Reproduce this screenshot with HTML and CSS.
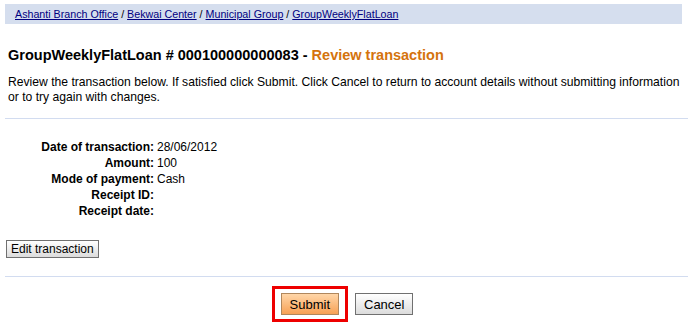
FILE: index.html
```html
<!DOCTYPE html>
<html lang="en">
<head>
    <meta charset="UTF-8">
    <title>Review transaction</title>
    <link rel="stylesheet" href="styles.css">
</head>
<body>
    <!-- Breadcrumb -->
    <div class="breadcrumb">
        <a href="#">Ashanti Branch Office</a> / <a href="#">Bekwai Center</a> / <a href="#">Municipal Group</a> / <a href="#">GroupWeeklyFlatLoan</a>
    </div>

    <div class="content">
        <h1 class="heading">GroupWeeklyFlatLoan # 000100000000083 - <span class="heading-accent">Review transaction</span></h1>
        <p class="intro">Review the transaction below. If satisfied click Submit. Click Cancel to return to account details without submitting information or to try again with changes.</p>
    </div>

    <hr class="divider">

    <!-- Transactie details -->
    <div class="details">
        <div class="label">Date of transaction:</div><div class="value">28/06/2012</div>
        <div class="label">Amount:</div><div class="value">100</div>
        <div class="label">Mode of payment:</div><div class="value">Cash</div>
        <div class="label">Receipt ID:</div><div class="value"></div>
        <div class="label">Receipt date:</div><div class="value"></div>
    </div>

    <div class="edit-row">
        <button class="btn">Edit transaction</button>
    </div>

    <hr class="divider divider-bottom">

    <div class="actions">
        <span class="highlight"><button class="btn btn-primary">Submit</button></span>
        <button class="btn">Cancel</button>
    </div>
</body>
</html>
```

FILE: styles.css
```css
* {
    margin: 0;
    padding: 0;
    box-sizing: border-box;
}

body {
    background-color: #ffffff;
    font-family: "Liberation Sans", Arial, sans-serif;
    font-size: 12px;
    color: #000000;
    padding: 4px 7px 0 5px;
}

/* Breadcrumb styling */
.breadcrumb {
    background-color: #d5deee;
    height: 20px;
    line-height: 20px;
    padding-left: 10px;
    font-size: 10.7px;
    width: 677px;
}

.breadcrumb a {
    color: #000080;
}

.content {
    padding: 0 3px;
}

.heading {
    font-size: 14.5px;
    font-weight: bold;
    margin-top: 22px;
    line-height: 18px;
}

.heading-accent {
    color: #d4730d;
}

.intro {
    margin-top: 11px;
    font-size: 12.15px;
    line-height: 15px;
}

.divider {
    border: none;
    border-top: 1px solid #d2dcf0;
    margin-top: 13px;
}

.divider-bottom {
    margin-top: 18px;
}

/* Details grid */
.details {
    display: grid;
    grid-template-columns: 149px auto;
    column-gap: 3px;
    margin-top: 20px;
    line-height: 16px;
}

.label {
    font-weight: bold;
    text-align: right;
}

.value {
    min-height: 16px;
}

.edit-row {
    margin-top: 21px;
    padding-left: 1px;
}

/* Knoppen styling */
.btn {
    font-family: "Liberation Sans", Arial, sans-serif;
    font-size: 12px;
    color: #000000;
    background: linear-gradient(#ffffff, #dcdcdc);
    border: 1px solid #707070;
    height: 18px;
    padding: 0 4px;
    cursor: pointer;
}

.btn-primary {
    background: linear-gradient(#ffd6a8, #f7a155);
    border-color: #b0875c;
}

.actions {
    display: flex;
    justify-content: center;
    align-items: center;
    gap: 7px;
    margin-top: 9px;
    padding-right: 8px;
}

.actions .btn {
    height: 22px;
    padding: 0 8px;
    font-size: 13px;
}

.highlight {
    border: 3px solid #ee0000;
    padding: 4px 6px;
    display: inline-flex;
}
```
